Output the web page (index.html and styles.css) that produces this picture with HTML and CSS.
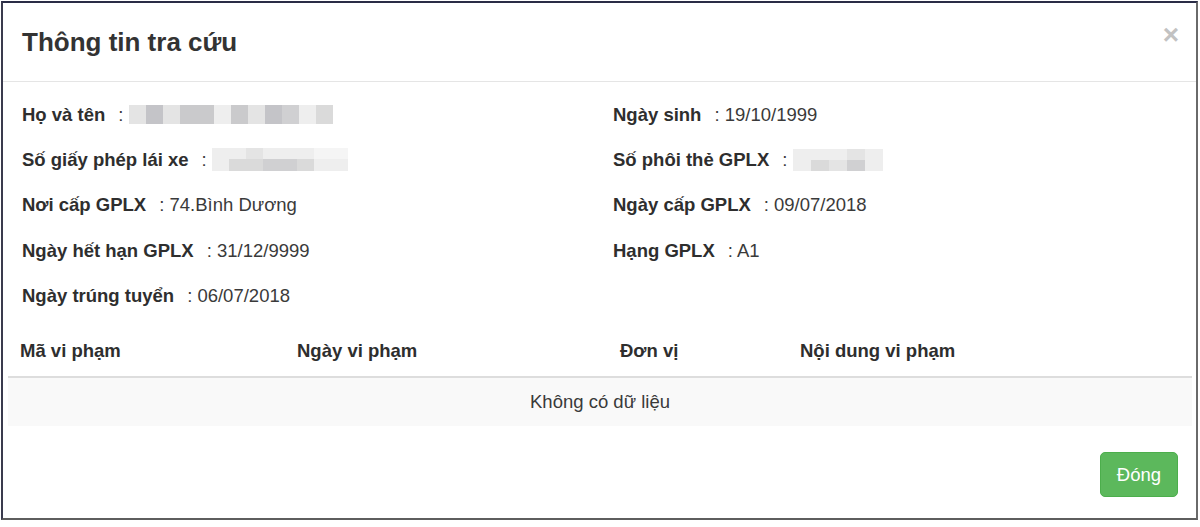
FILE: index.html
```html
<!DOCTYPE html>
<html lang="vi">
<head>
<meta charset="utf-8">
<title>Thông tin tra cứu</title>
<link rel="stylesheet" href="styles.css">
</head>
<body>
<div class="modal">
  <div class="modal-header">
    <h4 class="modal-title">Thông tin tra cứu</h4>
    <button class="close" type="button">×</button>
  </div>
  <div class="modal-body">
    <div class="info">
      <div class="row"><span class="lbl">Họ và tên</span><span class="val">: <span class="pix pix-name"><i class="c2"></i><i class="c6"></i><i class="c2"></i><i class="c5"></i><i class="c5"></i><i class="c1"></i><i class="c5"></i><i class="c2"></i><i class="c6"></i><i class="c4"></i><i class="c1"></i><i class="c3"></i></span></span></div>
      <div class="row"><span class="lbl">Ngày sinh</span><span class="val">: 19/10/1999</span></div>
      <div class="row"><span class="lbl">Số giấy phép lái xe</span><span class="val">: <span class="pix pix-lic"><i class="c1"></i><i class="c1"></i><i class="c2"></i><i class="c1"></i><i class="c1"></i><i class="c1"></i><i class="c0"></i><i class="c0"></i><i class="c1"></i><i class="c3"></i><i class="c3"></i><i class="c4"></i><i class="c4"></i><i class="c3"></i><i class="c1"></i><i class="c1"></i></span></span></div>
      <div class="row"><span class="lbl">Số phôi thẻ GPLX</span><span class="val">: <span class="pix pix-card"><i class="c1"></i><i class="c1"></i><i class="c1"></i><i class="c2"></i><i class="c1"></i><i class="c1"></i><i class="c3"></i><i class="c2"></i><i class="c4"></i><i class="c1"></i></span></span></div>
      <div class="row"><span class="lbl">Nơi cấp GPLX</span><span class="val">: 74.Bình Dương</span></div>
      <div class="row"><span class="lbl">Ngày cấp GPLX</span><span class="val">: 09/07/2018</span></div>
      <div class="row"><span class="lbl">Ngày hết hạn GPLX</span><span class="val">: 31/12/9999</span></div>
      <div class="row"><span class="lbl">Hạng GPLX</span><span class="val">: A1</span></div>
      <div class="row"><span class="lbl">Ngày trúng tuyển</span><span class="val">: 06/07/2018</span></div>
    </div>
    <table class="table">
      <colgroup>
        <col class="w1"><col class="w2"><col class="w3"><col class="w4">
      </colgroup>
      <thead>
        <tr><th>Mã vi phạm</th><th>Ngày vi phạm</th><th>Đơn vị</th><th>Nội dung vi phạm</th></tr>
      </thead>
      <tbody>
        <tr class="empty"><td colspan="4">Không có dữ liệu</td></tr>
      </tbody>
    </table>
  </div>
  <div class="modal-footer">
    <button class="btn-success" type="button">Đóng</button>
  </div>
</div>
</body>
</html>
```
FILE: styles.css
```css
* { box-sizing: border-box; }
html, body { margin: 0; padding: 0; background: #fff; }
body {
  font-family: "Liberation Sans", Arial, sans-serif;
  color: #333;
  font-size: 18.5px;
}
.modal {
  margin: 1px 0 0 1px;
  width: 1197px;
  height: 519px;
  border-style: solid;
  border-width: 2px 2px 2px 2px;
  border-color: #2a2c46 #6a6a6a #5e5e5e #3a3b4e;
  background: #fff;
  display: flex;
  flex-direction: column;
}
.modal-header {
  height: 79px;
  border-bottom: 1px solid #e5e5e5;
  display: flex;
  align-items: center;
  justify-content: space-between;
  padding: 0 17px 0 19px;
}
.modal-title {
  margin: 0;
  font-size: 26px;
  font-weight: bold;
  color: #333;
  line-height: 32px;
}
.close {
  align-self: flex-start;
  margin-top: 18px;
  border: 0;
  background: none;
  padding: 0;
  font-family: "Liberation Sans", Arial, sans-serif;
  font-size: 28px;
  font-weight: bold;
  line-height: 28px;
  color: #c2c2c2;
}
.modal-body {
  padding: 10px 3px 0 5px;
}
.info {
  display: grid;
  grid-template-columns: 591px 1fr;
  padding-left: 14px;
}
.row {
  height: 45.2px;
  line-height: 45px;
  white-space: nowrap;
}
.lbl {
  font-weight: bold;
  color: #2e2e2e;
  margin-right: 13px;
}
.val { color: #3a3a3a; }
.pix {
  display: inline-grid;
  vertical-align: middle;
  margin-top: -3px;
}
.pix i { display: block; }
.pix-name { grid-template-columns: repeat(12, 17px); grid-template-rows: 19px; }
.pix-lic { grid-template-columns: repeat(8, 17px); grid-template-rows: 11px 12px; }
.pix-card { grid-template-columns: repeat(5, 18px); grid-template-rows: 11px 11px; }
.c0 { background: #f5f5f5; }
.c1 { background: #eeeeee; }
.c2 { background: #e4e4e4; }
.c3 { background: #dadada; }
.c4 { background: #d0d0d2; }
.c5 { background: #cacacc; }
.c6 { background: #c4c4c8; }
.table {
  width: 1184px;
  margin-top: 8px;
  border-collapse: collapse;
  table-layout: fixed;
  font-size: 18.5px;
}
.w1 { width: 277px; }
.w2 { width: 323px; }
.w3 { width: 180px; }
.w4 { width: 404px; }
.table th {
  text-align: left;
  font-weight: bold;
  color: #2e2e2e;
  padding: 12px 12px;
  line-height: 26px;
  border-bottom: 2px solid #dddddd;
}
.table td {
  padding: 11px 12px;
  line-height: 26px;
  color: #3a3a3a;
}
.empty td {
  text-align: center;
  background: #f9f9f9;
}
.modal-footer {
  display: flex;
  justify-content: flex-end;
  padding: 26px 18px 0 0;
}
.btn-success {
  font-family: "Liberation Sans", Arial, sans-serif;
  font-size: 18.5px;
  line-height: 25px;
  padding: 9px 16px;
  color: #fff;
  background: #5cb85c;
  border: 1px solid #4cae4c;
  border-radius: 5px;
}
```
